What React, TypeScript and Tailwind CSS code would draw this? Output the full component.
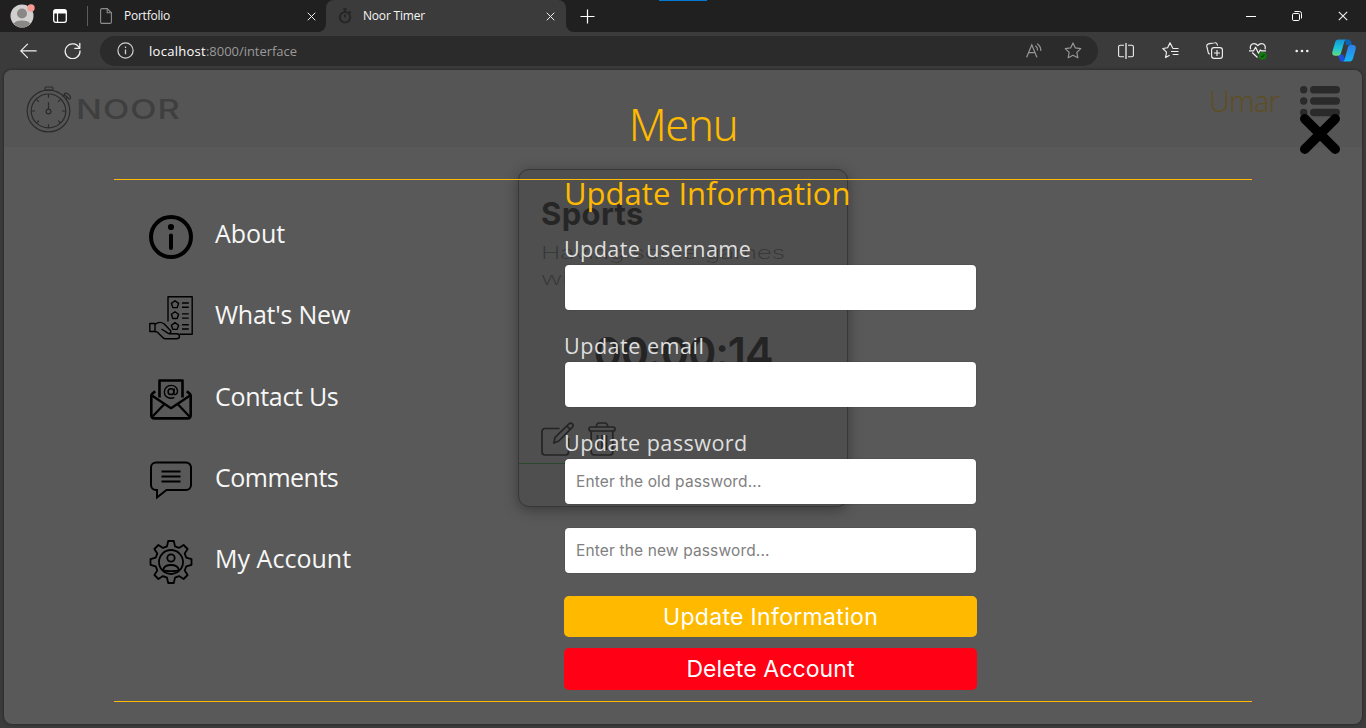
import React from "react";

const SEGOE = "font-['Open_Sans','Noto_Sans',sans-serif]";

function CloseGlyph({ s = 10 }: { s?: number }) {
  return (
    <svg width={s} height={s} viewBox="0 0 10 10" stroke="#f2f2f2" strokeWidth="1.1" fill="none">
      <path d="M0.8 0.8 9.2 9.2M9.2 0.8 0.8 9.2" />
    </svg>
  );
}

function TabBar() {
  return (
    <div className="flex h-8 bg-[#3b3b3b] text-[12px] text-[#f5f5f5]">
      <div className="flex w-[326px] items-center rounded-br-lg bg-[#202020] pl-[10px]">
        <svg width="26" height="26" viewBox="0 0 26 26" className="shrink-0">
          <circle cx="12" cy="13" r="11.5" fill="#d2d0ce" />
          <path d="M3.6 20.7C5 18.5 8 17.6 12 17.6s7 .9 8.400 3.100A11.500 11.500 0 0 1 3.600 20.700Z" fill="#8a8886" />
          <circle cx="12" cy="10.500" r="5" fill="#8a8886" />
          <circle cx="21" cy="5" r="3.700" fill="#f79a94" />
        </svg>
        <svg width="14" height="14" viewBox="0 0 14 14" className="ml-[17px]">
          <rect x="0.700" y="0.700" width="12.600" height="12.600" rx="2" fill="none" stroke="#fff" strokeWidth="1.300" />
          <path d="M1 1h12v3.500H1z" fill="#fff" />
          <path d="M4.500 4v9.500" stroke="#fff" strokeWidth="1.200" />
        </svg>
        <div className="ml-5 h-5 w-px bg-[#5c5c5c]" />
        <svg width="12" height="16" viewBox="0 0 12 16" className="ml-3" fill="none" stroke="#8c8c8c" strokeWidth="1.100">
          <path d="M2 .6h5.200l4.200 4.200V14a1.400 1.400 0 0 1-1.400 1.400H2A1.400 1.400 0 0 1 .6 14V2A1.400 1.400 0 0 1 2 .6Z" />
          <path d="M7.200.6v4.200h4.200" />
        </svg>
        <span className="ml-3 leading-4 tracking-[-0.24px]">Portfolio</span>
        <div className="mr-[10px] ml-auto flex">
          <CloseGlyph s={9} />
        </div>
      </div>
      <div className="w-[240px] bg-[#202020]">
        <div className="flex h-8 items-center rounded-t-lg bg-[#3b3b3b] pl-3">
          <svg width="14" height="16" viewBox="0 0 14 16" fill="none" stroke="#262626">
            <circle cx="7" cy="9.300" r="5.200" strokeWidth="2" />
            <path d="M7 6.500v3M5.300 1.200h3.400M7 1.200v2.500" strokeWidth="1.800" />
            <path d="m11 3.300 1.800 1.600" strokeWidth="2" />
          </svg>
          <span className="ml-[11px] leading-4 tracking-[-0.19px]">Noor Timer</span>
          <div className="mr-[11px] ml-auto flex">
            <CloseGlyph s={9} />
          </div>
        </div>
      </div>
      <div className="flex flex-1 items-center rounded-bl-lg bg-[#202020] pl-[14px]">
        <svg width="15" height="15" viewBox="0 0 15 15" stroke="#fff" strokeWidth="1.200">
          <path d="M7.500.5v14M.5 7.500h14" />
        </svg>
        <div className="ml-[64px] h-px w-12 self-start bg-[#0078d4]" />
        <div className="ml-auto flex">
          <div className="flex w-[46px] justify-center">
            <svg width="10" height="10" viewBox="0 0 10 10">
              <path d="M0 5.500h10" stroke="#fff" />
            </svg>
          </div>
          <div className="flex w-[46px] justify-center">
            <svg width="10" height="10" viewBox="0 0 10 10" fill="none" stroke="#fff">
              <rect x=".5" y="2.500" width="7" height="7" rx="1.200" />
              <path d="M2.500.5H7.500A2 2 0 0 1 9.500 2.500V7.500" />
            </svg>
          </div>
          <div className="flex w-[46px] justify-center">
            <CloseGlyph />
          </div>
        </div>
      </div>
    </div>
  );
}

function Cell({ children }: { children: React.ReactNode }) {
  return <div className="flex w-11 shrink-0 items-center justify-center">{children}</div>;
}

function Toolbar() {
  return (
    <div className="flex h-[38px] items-center bg-[#3b3b3b] pb-px pl-[6px]">
      <Cell>
        <svg width="17" height="16" viewBox="0 0 17 16" fill="none" stroke="#f0f0f0" strokeWidth="1.200" strokeLinecap="round" strokeLinejoin="round">
          <path d="M7.500 1.200.8 7.900l6.700 6.700M.8 7.900h15.400" />
        </svg>
      </Cell>
      <Cell>
        <svg width="17" height="17" viewBox="0 0 17 17" fill="none" stroke="#f0f0f0" strokeWidth="1.300" strokeLinecap="round" strokeLinejoin="round">
          <path d="M15.400 6.300A7.400 7.400 0 1 0 16 9" />
          <path d="M15.800 1.300v5h-5" />
        </svg>
      </Cell>
      <div className="mt-[1px] ml-[6px] flex h-[30px] w-[998px] items-center rounded-full bg-[#2b2b2b] pb-px pl-[17px] text-[13px]">
        <svg width="17" height="17" viewBox="0 0 17 17" fill="none" stroke="#d0d0d0">
          <circle cx="8.500" cy="8.500" r="7.600" strokeWidth="1.200" />
          <path d="M8.500 7.500v4.700M8.500 4.600v1.500" strokeWidth="1.300" />
        </svg>
        <span className="ml-[15px] leading-4 tracking-[0.28px] text-white">localhost</span>
        <span className="leading-4 tracking-[-0.040px] text-[#9a9a9a]">:8000/interface</span>
        <svg width="16" height="16" viewBox="0 0 16 16" className="ml-auto" fill="none" stroke="#969696" strokeWidth="1.200" strokeLinecap="round">
          <path d="m.8 14 5-12.200 5 12.200M2.600 9.700h6.400M9.700 3a4.500 4.500 0 0 1 1.800 4M11.600.9a8 8 0 0 1 3.200 6.500" />
        </svg>
        <svg width="18" height="17" viewBox="0 0 18 17" className="mr-4 ml-[22px]" fill="none" stroke="#969696" strokeWidth="1.200" strokeLinejoin="round">
          <path d="m9 1 2.350 4.900 5.400.75-3.900 3.750.95 5.350L9 13.200l-4.800 2.550.95-5.350L1.250 6.650l5.400-.75Z" />
        </svg>
      </div>
      <div className="ml-[6px] flex items-center">
        <Cell>
          <svg width="16" height="16" viewBox="0 0 16 16" fill="none" stroke="#f0f0f0" strokeWidth="1.100">
            <path d="M6 2.200H2.200A1.600 1.600 0 0 0 .6 3.800v8.400a1.600 1.600 0 0 0 1.600 1.600H6M10 2.200h3.800a1.600 1.600 0 0 1 1.600 1.600v8.400a1.600 1.600 0 0 1-1.600 1.600H10" />
            <path d="M8 0v16" strokeWidth="1.300" />
          </svg>
        </Cell>
        <Cell>
          <svg width="17" height="17" viewBox="0 0 17 17" fill="none" stroke="#f0f0f0" strokeWidth="1.150" strokeLinejoin="round">
            <path d="M11 6h-.3L8 .8 5.600 5.700.8 6.500l3.700 3.600-.9 5.500 4-2.300M16.500 6.500H10.700M16.500 9.500H9M16.500 12.500H10.700" />
          </svg>
        </Cell>
        <Cell>
          <svg width="17" height="17" viewBox="0 0 17 17" fill="none" stroke="#f0f0f0" strokeWidth="1.150">
            <rect x="5.600" y="5.600" width="10.800" height="10.800" rx="2.400" />
            <path d="M11 8v6M8 11h6M3.800 12.300 2.400 11.200.8 4.400A2.200 2.200 0 0 1 2.400 1.900L8.600.8a2.200 2.200 0 0 1 2.600 1.600l.4 1.300" />
          </svg>
        </Cell>
        <Cell>
          <svg width="18" height="18" viewBox="0 0 18 18" fill="none" stroke="#f0f0f0" strokeWidth="1.200" strokeLinejoin="round">
            <path d="M1.600 7.200C.5 4 2.600 1.600 5 1.600c1.800 0 2.900.9 3.800 2 .9-1.100 2-2 3.800-2 2.400 0 4.500 2.400 3.400 5.600M3.200 10.500l5.300 5" />
            <path d="M0 8.800h4.600l2-3.600 2.900 6 1.800-3.200 1 .8H17" />
            <circle cx="13.600" cy="13.800" r="3.900" fill="#107c10" stroke="none" />
            <path d="m11.900 14 1.200 1.100 2.300-2.500" stroke="#0a3d0a" />
          </svg>
        </Cell>
        <Cell>
          <svg width="14" height="4" viewBox="0 0 14 4" fill="#f0f0f0">
            <circle cx="1.700" cy="2" r="1.300" />
            <circle cx="7" cy="2" r="1.300" />
            <circle cx="12.300" cy="2" r="1.300" />
          </svg>
        </Cell>
        <svg width="24" height="23" viewBox="0 0 24 23" className="ml-[8px]">
          <defs>
            <linearGradient id="cpa" x1="0" y1="0" x2="0" y2="1">
              <stop offset="0" stopColor="#1495d8" />
              <stop offset=".55" stopColor="#1cc4d8" />
              <stop offset="1" stopColor="#66dc7c" />
            </linearGradient>
            <linearGradient id="cpb" x1="0" y1="0" x2="0" y2="1">
              <stop offset="0" stopColor="#2f7fe8" />
              <stop offset="1" stopColor="#14b4f4" />
            </linearGradient>
          </defs>
          <path d="M13 .5h3.500c1.600 0 2.200 1 2.700 2.600l.9 3H14Z" fill="#0b63b8" />
          <path d="M6 15.500h5l2 4.500-1 2.500c-2.500.2-4.200-.4-5-3Z" fill="#1a4fd8" />
          <path d="M6.500.5H14c-1 .6-1.600 1.800-2 3.200L9 14c-.5 1.800-1.600 2.700-3.200 2.700H3.200C.8 16.700-.2 15 .4 12.800L3 3.500C3.600 1.400 4.600.5 6.500.5Z" fill="url(#cpa)" />
          <path d="M18.300 6.100h2.700c2.200 0 3.300 1.700 2.700 3.900L21 19.500c-.6 2.100-1.700 3-3.500 3H11c1-.6 1.500-1.700 1.900-3.100l2.900-10.700c.4-1.700 1.200-2.600 2.500-2.600Z" fill="url(#cpb)" />
        </svg>
      </div>
    </div>
  );
}

function Stopwatch() {
  return (
    <svg width="46" height="47" viewBox="0 0 46 48" preserveAspectRatio="none" fill="none" stroke="#2b2b2b" strokeWidth="1.200">
      <circle cx="22.500" cy="25.500" r="21.300" />
      <circle cx="22.500" cy="25.500" r="17.300" />
      <circle cx="22.500" cy="26" r="2.400" />
      <path d="M22.500 16.500v7M22.500 8.500v3.500M22.500 39v3.500M5.500 25.500H9M36 25.500h3.500M10.700 14l2.200 2.200M34.300 14l-2.200 2.200M10.700 37.500l2.200-2.200M34.300 37.500l-2.200-2.200" />
      <rect x="19" y="1" width="8" height="3.200" rx="1.200" />
      <path d="M20.800 4.400v0M24.800 4.400v0M36.800 11l2.200-2.400M39.300 13.600l2.300-2.400" />
      <path d="M38.500 7.700c1.200-1 3-.2 4.400 1.200s2.200 3 1.200 4.200l-1 .2-5-4.700Z" />
    </svg>
  );
}

function PageHeader() {
  return (
    <div className="flex h-[77px] bg-[#555555] pt-4 pl-[22px]">
      <Stopwatch />
      <div className="mt-[7px] ml-[4px] w-[110px] origin-left scale-x-[1.270] font-['Inter',sans-serif] text-[27px] leading-[34px] font-medium tracking-[0.800px] text-[#3f3f3f]">
        NOOR
      </div>
      <div className="mt-[-3px] ml-auto pr-[21px] font-['Noto_Sans',sans-serif] text-[28.800px] leading-[36px] font-light tracking-[-0.830px] text-[#5e4e25]">
        Umar
      </div>
      <svg width="40" height="31" viewBox="0 0 40 31" className="mr-[22px]" fill="#2a2a2a">
        <circle cx="3.700" cy="3.700" r="3.700" />
        <circle cx="3.700" cy="15" r="3.700" />
        <circle cx="3.700" cy="26.500" r="3.700" />
        <rect x="10" y="0" width="30" height="7.400" rx="3.700" />
        <rect x="10" y="11.300" width="30" height="7.400" rx="3.700" />
        <rect x="10" y="22.800" width="30" height="7.400" rx="3.700" />
      </svg>
    </div>
  );
}

function TimerCard() {
  return (
    <div className="mt-[22px] ml-[514px] flex h-[338px] w-[330px] flex-col rounded-[11px] border border-[#373737] bg-[#4f4f4f] font-['Inter',sans-serif] shadow-[0_3px_14px_rgba(0,0,0,0.35)]">
      <div className="h-[294px] border-b border-[#2c472f] px-[22px] pt-[25px]">
        <div className="h-[38px] text-[31px] leading-[38px] font-bold tracking-[0.350px] text-[#262626]">Sports</div>
        <div className="mt-[7px] w-[160px] origin-left scale-x-[1.5] text-[17.500px] leading-[26px] font-extralight tracking-[-0.100px] whitespace-nowrap text-[#353535]">
          Having some games
          <br />
          with
        </div>
        <div className="mt-[35px] h-[50px] text-center text-[43px] leading-[50px] font-semibold tracking-[-1.100px] text-[#242424]">00:00:14</div>
        <div className="mt-[45px] flex gap-[13px]">
          <svg width="34" height="34" viewBox="0 0 34 34" fill="none" stroke="#242424" strokeWidth="1.700" strokeLinejoin="round">
            <path d="M18.500 6.500H4a3 3 0 0 0-3 3V30a3 3 0 0 0 3 3h20.500a3 3 0 0 0 3-3V16" />
            <path d="m12.800 21 1.300-5.600L28 1.800c1-1 2.400-.8 3.300.1s1.100 2.300.1 3.300L17.800 19Z" />
            <path d="m25.800 4 3.700 3.700" />
          </svg>
          <svg width="28" height="34" viewBox="0 0 28 34" fill="none" stroke="#242424" strokeWidth="1.700" strokeLinejoin="round">
            <rect x="1" y="5" width="26" height="4" rx="2" />
            <path d="M8 4.800 9 2.300C9.300 1.400 10 1 11 1h6c1 0 1.700.4 2 1.300l1 2.500M3.200 9.200V30a3 3 0 0 0 3 3h15.600a3 3 0 0 0 3-3V9.200M9.500 13v15M14 13v15M18.500 13v15" />
          </svg>
        </div>
      </div>
    </div>
  );
}

function InfoIcon() {
  return (
    <svg width="44" height="44" viewBox="0 0 44 44">
      <circle cx="22" cy="22" r="20" fill="none" stroke="#000" strokeWidth="4" />
      <circle cx="22" cy="12" r="3.100" />
      <path d="M22 20.500v12.500" stroke="#000" strokeWidth="4" strokeLinecap="round" />
    </svg>
  );
}

function NewsIcon() {
  return (
    <svg width="44" height="44" viewBox="0 0 44 44" fill="none" stroke="#000" strokeWidth="1.400" strokeLinejoin="round">
      <path d="M19 25.500V.8h24.200v37.400H30.500" />
      <path d="m26 4.800 3.600 2.600-1.400 4.200h-4.400l-1.400-4.200ZM26 15.700l3.600 2.600-1.400 4.200h-4.400l-1.400-4.200ZM26 26.600l3.600 2.600-1.400 4.200h-4.400l-1.400-4.200Z" />
      <path d="M33 7h6.800M33 11.200h6.800M33 17.900h6.800M33 22.100h6.800M33 28.800h6.800M33 33h6.800" />
      <path d="M.8 27.500h5.200v8H.8ZM6 28.500c3-2.500 6-2.800 9-.7l6.500 6.700c1.200 1.700-.6 3.700-2.600 2.600L12.500 33M6 35.500l2.500.7 5.500 5.600c.8.8 1.500 1 2.500 1h11c4 0 4-5 0-5h-8" />
    </svg>
  );
}

function MailIcon() {
  return (
    <svg width="44" height="44" viewBox="0 0 44 44" fill="none" stroke="#000" strokeWidth="2.600" strokeLinejoin="round">
      <path d="M10.500 20.500V3.500h23v17" />
      <path d="M6.200 14.200 3 17a3 3 0 0 0-.7 2v19c0 2 1.200 3.400 3.200 3.400h33c2 0 3.200-1.400 3.200-3.400V19a3 3 0 0 0-.7-2l-3.200-2.800" />
      <path d="M2.500 18.300 22 31.200l19.500-12.900M3 40l12.200-12.800M41 40 28.800 27.200" strokeWidth="2.300" />
      <circle cx="22" cy="14.700" r="2.900" strokeWidth="1.500" />
      <path d="M25.300 11.500l-.6 4.800c-.1 2.200 3.600 1.500 3.800-1.700.2-4-2.900-6.200-6.400-6.200-3.700 0-6.700 2.700-6.700 6.500 0 5.200 5.400 7.600 9.900 5.600" strokeWidth="1.400" />
    </svg>
  );
}

function CommentIcon() {
  return (
    <svg width="44" height="44" viewBox="0 0 44 44" fill="none" stroke="#000" strokeWidth="2">
      <path d="M7 4.500h30a5 5 0 0 1 5 5V27a5 5 0 0 1-5 5H17.500L8 39.500V32H7a5 5 0 0 1-5-5V9.500a5 5 0 0 1 5-5Z" />
      <path d="M12.500 13.500h19M12.500 18.500h19M12.500 23.500h19" />
    </svg>
  );
}

const TOOTH =
  "M19.200 1h5.600l1.200 5.300 4 1.600 4.600-2.900 4 4-2.900 4.600 1.600 4 5.200 1.600v5.600l-5.200 1.600-1.600 4 2.900 4.600-4 4-4.600-2.900-4 1.600-1.200 5.300h-5.600L18 37.700l-4-1.600L9.400 39l-4-4 2.900-4.600-1.600-4L1.500 24.800v-5.600l5.200-1.600 1.600-4L5.400 9l4-4L14 7.900l4-1.600Z";

function AccountIcon() {
  return (
    <svg width="44" height="44" viewBox="0 0 44 44" fill="none" stroke="#000" strokeWidth="1.800" strokeLinejoin="round">
      <path d={TOOTH} />
      <circle cx="22" cy="22" r="12" />
      <circle cx="22" cy="18" r="3.700" />
      <path d="M14 30c.8-3.600 4-5 8-5s7.200 1.400 8 5c-1.600 1.500-14.400 1.500-16 0Z" />
    </svg>
  );
}

function MenuRow({ icon, label, track }: { icon: React.ReactNode; label: string; track: string }) {
  return (
    <div className="flex h-[81.250px] items-center">
      {icon}
      <span className={`ml-[22px] pb-[7px] text-[25px] leading-[32px] whitespace-nowrap text-[#f7f7f7] ${track}`}>{label}</span>
    </div>
  );
}

function Field({ label, track }: { label: string; track: string }) {
  return (
    <label className="flex flex-col">
      <span className={`ml-[-1px] h-[26px] text-[21.600px] leading-[20px] whitespace-nowrap text-[#dedede] ${track}`}>{label}</span>
      <input className="h-[45px] rounded-[4px] bg-white shadow-[0_0_1px_rgba(0,0,0,0.6)]" />
    </label>
  );
}

const PASSWORD_INPUT =
  "h-[45px] w-full rounded-[4px] bg-white px-[11px] font-['Inter',sans-serif] text-[15.500px] tracking-[0.140px] text-black shadow-[0_0_1px_rgba(0,0,0,0.6)] placeholder:text-[#808080]";

function MenuOverlay() {
  return (
    <div className="absolute inset-0 flex flex-col px-[110px]">
      <h1 className="mt-[28px] mb-[29px] text-center font-['Noto_Sans',sans-serif] text-[43.500px] leading-[52px] font-light tracking-[-1.300px] text-[#ffba00]">
        Menu
      </h1>
      <div className="flex h-[523px] border-y border-[#ffba00] pl-[35px]">
        <div className="w-[416px] pt-4">
          <MenuRow icon={<InfoIcon />} label="About" track="tracking-[-0.080px]" />
          <MenuRow icon={<NewsIcon />} label="What's New" track="tracking-[-0.230px]" />
          <MenuRow icon={<MailIcon />} label="Contact Us" track="tracking-[-0.300px]" />
          <MenuRow icon={<CommentIcon />} label="Comments" track="tracking-[-0.510px]" />
          <MenuRow icon={<AccountIcon />} label="My Account" track="tracking-[0.020px]" />
        </div>
        <div className="flex w-[411px] flex-col">
          <h2 className="ml-[-1px] h-[59px] text-[31px] leading-[27px] whitespace-nowrap tracking-[0.020px] text-[#ffba00]">Update Information</h2>
          <Field label="Update username" track="tracking-[0.380px]" />
          <div className="h-[26px]" />
          <Field label="Update email" track="tracking-[0.480px]" />
          <div className="h-[26px]" />
          <span className="ml-[-1px] h-[26px] text-[21.600px] leading-[20px] tracking-[0.440px] text-[#dedede]">Update password</span>
          <input className={PASSWORD_INPUT} placeholder="Enter the old password..." />
          <input className={`${PASSWORD_INPUT} mt-6`} placeholder="Enter the new password..." />
          <button className="mx-[-1px] mt-[23px] h-[41px] shrink-0 rounded-[5px] bg-[#ffba00] font-['Inter',sans-serif] text-[23px] leading-[40px] tracking-[0.320px] text-white">
            Update Information
          </button>
          <button className="mx-[-1px] mt-[11px] h-[42px] shrink-0 rounded-[5px] bg-[#ff0015] font-['Inter',sans-serif] text-[23px] leading-[42px] tracking-[0.100px] text-white">
            Delete Account
          </button>
        </div>
      </div>
      <svg width="42" height="42" viewBox="0 0 42 42" className="absolute top-[43px] right-[21px]" stroke="#000" strokeWidth="9.600" strokeLinecap="round">
        <path d="M5.800 5.800 36.200 36.200M36.200 5.800 5.800 36.200" />
      </svg>
    </div>
  );
}

export default function App() {
  return (
    <div className={`flex h-[728px] w-[1366px] flex-col overflow-hidden bg-[#3b3b3b] ${SEGOE}`}>
      <TabBar />
      <Toolbar />
      <div className="relative mx-1 h-[654px] overflow-hidden rounded-lg bg-[#595959] shadow-[0_0_3px_rgba(0,0,0,0.5)]">
        <PageHeader />
        <TimerCard />
        <MenuOverlay />
      </div>
    </div>
  );
}
